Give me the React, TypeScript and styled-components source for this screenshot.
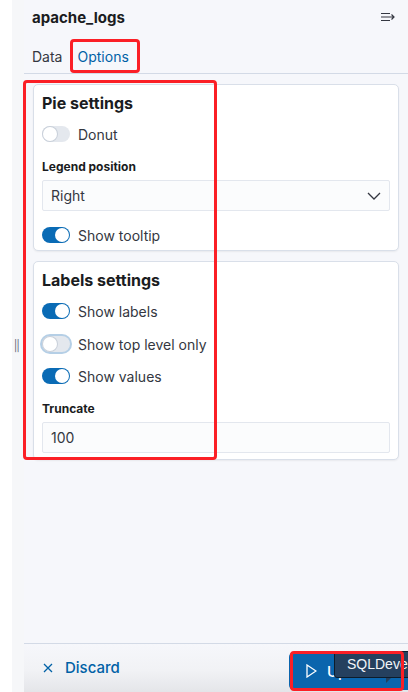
import React from "react";
import styled, { createGlobalStyle } from "styled-components";

const Global = createGlobalStyle`
  html, body { margin: 0; padding: 0; background: #ffffff; }
  body { font-family: Inter, "Noto Sans", "Liberation Sans", sans-serif; -webkit-font-smoothing: antialiased; }
  * { box-sizing: border-box; }
`;

const Page = styled.div`
  position: relative;
  display: flex;
  width: 408px;
  height: 692px;
  overflow: hidden;
`;

const Rail = styled.div`
  width: 24px;
  flex: none;
  display: flex;
  align-items: center;
  justify-content: flex-end;
  padding-right: 5px;
  background: linear-gradient(90deg, #ffffff 0 12px, #f6f7f9 12px 24px);
  color: #69707d;
  font-size: 11px;
  letter-spacing: -1px;
`;

const Panel = styled.div`
  flex: 1;
  display: flex;
  flex-direction: column;
  background: #f6f7fb;
  min-width: 0;
`;

const Header = styled.div`
  height: 36px;
  display: flex;
  align-items: center;
  justify-content: space-between;
  padding: 0 12px 2px 8px;
`;

const Title = styled.h1`
  margin: 0;
  font-size: 15px;
  font-weight: 700;
  color: #1a1c21;
`;

const Tabs = styled.div`
  height: 38px;
  display: flex;
  align-items: center;
  gap: 15px;
  padding: 3px 8px 0;
  border-bottom: 1px solid #d3dae6;
`;

const Tab = styled.span<{ $active?: boolean }>`
  font-size: 14px;
  color: ${(p) => (p.$active ? "#0061a6" : "#343741")};
`;

const Content = styled.div`
  display: flex;
  flex-direction: column;
  gap: 10px;
  padding: 10px 9px 0 9px;
`;

const Card = styled.section`
  background: #ffffff;
  border: 1px solid #d9dfe9;
  border-radius: 5px;
  box-shadow: 0 1px 2px rgba(0, 0, 0, 0.06);
  padding: 7px 8px 6px 8px;
  display: flex;
  flex-direction: column;
`;

const CardTitle = styled.h2`
  margin: 0 0 11px;
  font-size: 16px;
  font-weight: 700;
  color: #1a1c21;
  line-height: 22px;
`;

const SwitchRow = styled.div<{ $gap?: number }>`
  display: flex;
  align-items: center;
  gap: 8px;
  height: 18px;
  margin-bottom: ${(p) => p.$gap ?? 14}px;
  font-size: 14px;
  color: #343741;
`;

const Track = styled.span<{ $on?: boolean; $focus?: boolean }>`
  position: relative;
  width: 28px;
  height: 16px;
  border-radius: 8px;
  flex: none;
  background: ${(p) => (p.$on ? "#0a6bb5" : "#e4e8ee")};
  box-shadow: ${(p) => (p.$focus ? "0 0 0 2px #b5cfe6" : "none")};
  &::after {
    content: "";
    position: absolute;
    top: 1px;
    left: ${(p) => (p.$on ? "13px" : "1px")};
    width: 14px;
    height: 14px;
    border-radius: 50%;
    background: #ffffff;
    box-shadow: ${(p) => (p.$on ? "none" : "0 0 0 1px #c9d0da")};
  }
`;

const FieldLabel = styled.div`
  font-size: 12px;
  font-weight: 700;
  color: #1a1c21;
  line-height: 16px;
  margin-bottom: 5px;
`;

const Select = styled.div`
  height: 31px;
  display: flex;
  align-items: center;
  justify-content: space-between;
  padding: 0 8px 0 8px;
  background: #fbfcfd;
  border: 1px solid #e3e7ee;
  border-radius: 2px;
  font-size: 14px;
  color: #343741;
  margin-bottom: 15px;
`;

const Input = styled.div`
  height: 31px;
  display: flex;
  align-items: center;
  padding: 0 8px;
  background: #fbfcfd;
  border: 1px solid #e3e7ee;
  border-radius: 2px;
  font-size: 14px;
  color: #343741;
`;

const Spacer = styled.div`
  flex: 1;
`;

const Footer = styled.div`
  height: 49px;
  flex: none;
  border-top: 1px solid #d3dae6;
  display: flex;
  align-items: center;
  justify-content: space-between;
  padding: 0 0 0 19px;
  background: linear-gradient(180deg, #f6f7fb 0%, #f1f2f5 55%, #e4e5e9 100%);
`;

const Discard = styled.span`
  display: flex;
  align-items: center;
  gap: 12px;
  color: #0061a6;
  font-size: 15px;
  font-weight: 500;
  padding-bottom: 1px;
`;

const UpdateButton = styled.span`
  width: 124px;
  height: 38px;
  margin-top: 6px;
  margin-right: -5px;
  border-radius: 5px 0 0 5px;
  background: #0a65ad;
  display: flex;
  align-items: center;
  gap: 10px;
  padding-left: 17px;
  color: #ffffff;
  font-size: 15px;
  font-weight: 500;
`;

const Annot = styled.div<{ $x: number; $y: number; $w: number; $h: number }>`
  position: absolute;
  left: ${(p) => p.$x}px;
  top: ${(p) => p.$y}px;
  width: ${(p) => p.$w}px;
  height: ${(p) => p.$h}px;
  border: 3px solid #fb1f26;
  border-radius: 4px;
  pointer-events: none;
`;

const Tooltip = styled.div`
  position: absolute;
  left: 334px;
  top: 651px;
  width: 80px;
  height: 27px;
  background: #25405e;
  border: 1px solid #0d1c2b;
  border-radius: 3px;
  color: #f2f5f8;
  font-family: "Liberation Sans", Arial, sans-serif;
  font-size: 14px;
  white-space: nowrap;
  overflow: hidden;
  padding: 4px 0 0 12px;
`;

const TooltipArrow = styled.div`
  position: absolute;
  left: 386px;
  top: 677px;
  width: 0;
  height: 0;
  border-right: 6px solid transparent;
  border-top: 6px solid #25405e;
`;

const Toggle = ({ on, focus, label, gap }: { on?: boolean; focus?: boolean; label: string; gap?: number }) => (
  <SwitchRow $gap={gap}>
    <Track $on={on} $focus={focus} />
    <span>{label}</span>
  </SwitchRow>
);

export default function App() {
  return (
    <Page>
      <Global />
      <Rail>||</Rail>
      <Panel>
        <Header>
          <Title>apache_logs</Title>
          <svg width="16" height="12" viewBox="0 0 16 12" fill="none" stroke="#343741" strokeWidth="1.2">
            <path d="M1 2.5h9M1 6h13M1 9.5h9M11.5 3.5L14 6l-2.5 2.5" />
          </svg>
        </Header>
        <Tabs>
          <Tab>Data</Tab>
          <Tab $active>Options</Tab>
        </Tabs>
        <Content>
          <Card>
            <CardTitle>Pie settings</CardTitle>
            <Toggle label="Donut" gap={16} />
            <FieldLabel>Legend position</FieldLabel>
            <Select>
              <span>Right</span>
              <svg width="14" height="8" viewBox="0 0 14 8" fill="none" stroke="#343741" strokeWidth="1.3">
                <path d="M1 1l6 6 6-6" />
              </svg>
            </Select>
            <Toggle on label="Show tooltip" gap={0} />
          </Card>
          <Card>
            <CardTitle>Labels settings</CardTitle>
            <Toggle on label="Show labels" gap={15} />
            <Toggle focus label="Show top level only" gap={14} />
            <Toggle on label="Show values" gap={16} />
            <FieldLabel>Truncate</FieldLabel>
            <Input>100</Input>
          </Card>
        </Content>
        <Spacer />
        <Footer>
          <Discard>
            <svg width="10" height="10" viewBox="0 0 10 10" stroke="#0061a6" strokeWidth="1.3">
              <path d="M1 1l8 8M9 1l-8 8" />
            </svg>
            Discard
          </Discard>
          <UpdateButton>
            <svg width="11" height="14" viewBox="0 0 11 14" fill="none" stroke="#ffffff" strokeWidth="1.3">
              <path d="M1 1l9 6-9 6z" />
            </svg>
            Update
          </UpdateButton>
        </Footer>
      </Panel>
      <Annot $x={70} $y={39} $w={70} $h={34} />
      <Annot $x={23} $y={80} $w={194} $h={380} />
      <TooltipArrow />
      <Tooltip>SQLDeveloper</Tooltip>
      <Annot $x={290} $y={651} $w={114} $h={40} />
    </Page>
  );
}
